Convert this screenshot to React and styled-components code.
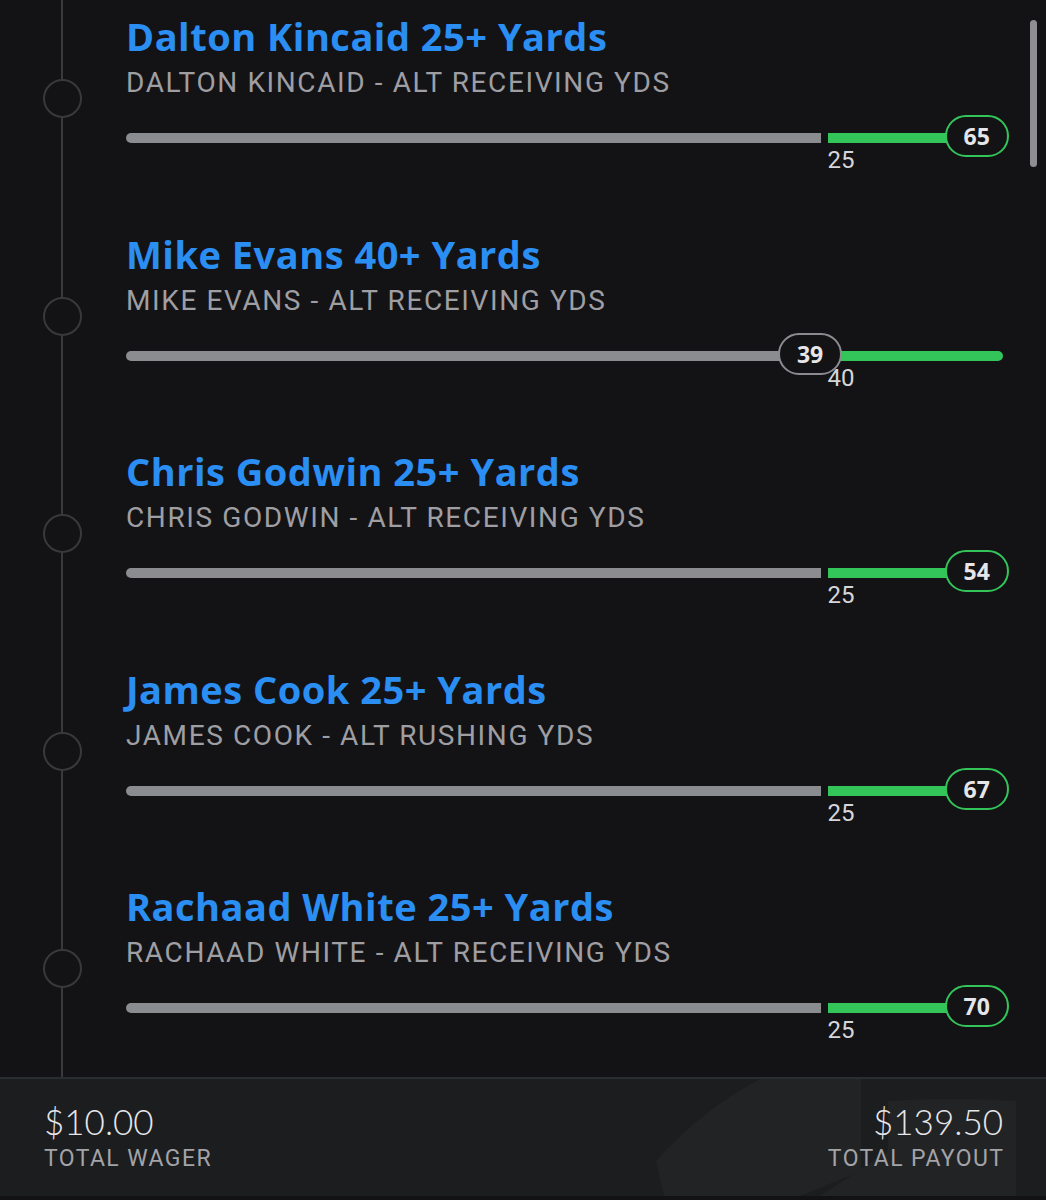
import React from 'react';
import styled, { createGlobalStyle } from 'styled-components';

const GlobalStyle = createGlobalStyle`
  html, body {
    margin: 0;
    padding: 0;
    background: #131315;
  }
  * { box-sizing: border-box; }
`;

const Screen = styled.div`
  position: relative;
  width: 1046px;
  height: 1200px;
  background: #131315;
  display: flex;
  flex-direction: column;
  overflow: hidden;
`;

const List = styled.div`
  flex: 1;
  min-height: 0;
  overflow: hidden;
  display: flex;
  flex-direction: column;
`;

// 스크롤바
const ScrollThumb = styled.div`
  position: absolute;
  top: 20px;
  left: 1030px;
  width: 7px;
  height: 147px;
  border-radius: 4px;
  background: #8e8e93;
`;

const Item = styled.div`
  display: flex;
  flex-shrink: 0;
  height: 217.5px;
`;

const Rail = styled.div`
  position: relative;
  width: 126px;
  flex-shrink: 0;

  &::before {
    content: '';
    position: absolute;
    top: 0;
    bottom: 0;
    left: 61px;
    width: 2px;
    background: #39393c;
  }
`;

const Dot = styled.div`
  position: relative;
  margin: 79px 0 0 43px;
  width: 39px;
  height: 39px;
  border-radius: 50%;
  border: 2.5px solid #39393c;
  background: #131315;
`;

const Content = styled.div`
  flex: 1;
  padding: 14px 43px 0 0;
  display: flex;
  flex-direction: column;
`;

const Title = styled.div`
  font-family: 'Open Sans', Lato, sans-serif;
  font-weight: 700;
  font-size: 38px;
  line-height: 44px;
  letter-spacing: 0.5px;
  color: #2b8ef3;
`;

const Subtitle = styled.div`
  font-family: Roboto, 'Liberation Sans', sans-serif;
  font-weight: 400;
  font-size: 28px;
  line-height: 34px;
  letter-spacing: 1.6px;
  margin-top: 8px;
  color: #9e9ea3;
`;

const Track = styled.div`
  position: relative;
  margin-top: 15px;
  height: 42px;
  display: flex;
  align-items: center;
`;

const Bar = styled.div`
  height: 10px;
  margin-top: 4px;
  background: ${(p) => (p.$hit ? '#33c45a' : '#8a8c8f')};
  border-radius: ${(p) => (p.$hit ? '0 5px 5px 0' : '5px 0 0 5px')};
  flex: ${(p) => (p.$hit ? 1 : 'none')};
`;

const Gap = styled.div`
  width: 7px;
  flex-shrink: 0;
`;

const Pill = styled.div`
  position: absolute;
  top: 0;
  width: 64px;
  height: 42px;
  border-radius: 21px;
  border: 2.5px solid ${(p) => (p.$hit ? '#33c45a' : '#8a8c8f')};
  background: #131315;
  display: flex;
  align-items: center;
  justify-content: center;
  font-family: 'Open Sans', Lato, sans-serif;
  font-weight: 700;
  font-size: 23px;
  color: #e6e6ea;
`;

const Mark = styled.div`
  font-family: Roboto, 'Liberation Sans', sans-serif;
  font-size: 24px;
  line-height: 24px;
  color: #d6d6da;
  margin-top: -9px;
`;

const Footer = styled.div`
  position: relative;
  height: 123px;
  flex-shrink: 0;
  background: #1c1d1f;
  border-top: 2px solid #2c2d30;
  border-bottom: 4px solid #121214;
  display: flex;
  align-items: center;
  justify-content: space-between;
  padding: 0 43px 2px 44px;
  overflow: hidden;
`;

const Watermark = styled.svg`
  position: absolute;
  left: 0;
  top: 0;
  width: 1046px;
  height: 117px;
`;

const Total = styled.div`
  position: relative;
  display: flex;
  flex-direction: column;
  align-items: ${(p) => (p.$right ? 'flex-end' : 'flex-start')};
`;

const Amount = styled.div`
  font-family: Lato, 'Open Sans', sans-serif;
  font-weight: 300;
  font-size: 35px;
  line-height: 42px;
  color: #e6e6ea;
`;

const Caption = styled.div`
  font-family: Roboto, 'Liberation Sans', sans-serif;
  font-size: 23px;
  line-height: 28px;
  letter-spacing: 1.4px;
  margin-right: -1.4px;
  margin-top: 3px;
  color: #a3a3a8;
`;

const legs = [
  { title: 'Dalton Kincaid 25+ Yards', sub: 'DALTON KINCAID - ALT RECEIVING YDS', line: 25, value: 65, pos: 0.97 },
  { title: 'Mike Evans 40+ Yards', sub: 'MIKE EVANS - ALT RECEIVING YDS', line: 40, value: 39, pos: 0.78 },
  { title: 'Chris Godwin 25+ Yards', sub: 'CHRIS GODWIN - ALT RECEIVING YDS', line: 25, value: 54, pos: 0.97 },
  { title: 'James Cook 25+ Yards', sub: 'JAMES COOK - ALT RUSHING YDS', line: 25, value: 67, pos: 0.97 },
  { title: 'Rachaad White 25+ Yards', sub: 'RACHAAD WHITE - ALT RECEIVING YDS', line: 25, value: 70, pos: 0.97 },
];

const MARK = 0.8; // 기준선 위치

const Leg = ({ leg }) => {
  const hit = leg.value >= leg.line;
  return (
    <Item>
      <Rail>
        <Dot />
      </Rail>
      <Content>
        <Title>{leg.title}</Title>
        <Subtitle>{leg.sub}</Subtitle>
        <Track>
          <Bar style={{ width: `calc(${MARK * 100}% - 7px)` }} />
          <Gap />
          <Bar $hit />
          <Pill $hit={hit} style={{ left: `calc(${leg.pos * 100}% - 32px)` }}>
            {leg.value}
          </Pill>
        </Track>
        <Mark style={{ paddingLeft: `${MARK * 100}%` }}>{leg.line}</Mark>
      </Content>
    </Item>
  );
};

const App = () => (
  <>
    <GlobalStyle />
    <Screen>
      <List>
        {legs.map((leg) => (
          <Leg key={leg.title} leg={leg} />
        ))}
      </List>
      <ScrollThumb />
      <Footer>
        <Watermark viewBox="0 0 1046 117">
          <path d="M760 0 L861 0 L861 92 L800 117 L664 117 L656 82 Q700 32 760 0 Z" fill="#222325" />
          <path d="M888 22 Q950 18 1016 22 L1016 117 L820 117 L888 72 Z" fill="#222325" />
        </Watermark>
        <Total>
          <Amount>$10.00</Amount>
          <Caption>TOTAL WAGER</Caption>
        </Total>
        <Total $right>
          <Amount>$139.50</Amount>
          <Caption>TOTAL PAYOUT</Caption>
        </Total>
      </Footer>
    </Screen>
  </>
);

export default App;
